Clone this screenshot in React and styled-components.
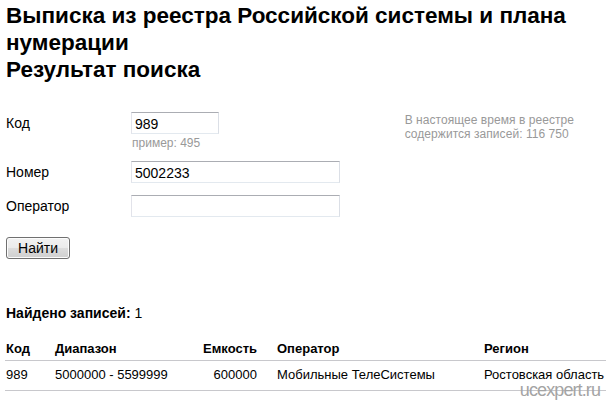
import React from "react";
import styled, { createGlobalStyle } from "styled-components";

const GlobalStyle = createGlobalStyle`
  html, body {
    margin: 0;
    padding: 0;
    background: #fff;
  }
  body {
    font-family: "Liberation Sans", Arial, sans-serif;
    color: #000;
  }
`;

const Page = styled.div`
  position: relative;
  width: 606px;
  height: 400px;
  overflow: hidden;
  padding: 2px 0 0 5px;
  box-sizing: border-box;
`;

const Title = styled.h1`
  margin: 0;
  font-size: 22.5px;
  line-height: 27px;
  font-weight: bold;
  padding-left: 1px;
`;

const Form = styled.form`
  display: grid;
  grid-template-columns: 126px 1fr;
  margin-top: 29px;
  position: relative;
`;

const Label = styled.label`
  font-size: 14px;
  line-height: 16px;
  padding: 3px 0 0 1px;
`;

const Field = styled.div`
  display: flex;
  flex-direction: column;
  margin-bottom: ${(p) => p.$gap}px;
`;

const Input = styled.input`
  box-sizing: border-box;
  width: ${(p) => p.$w}px;
  height: 22px;
  margin: 0;
  padding: 2px 3px 0;
  font-family: "Liberation Sans", Arial, sans-serif;
  font-size: 14px;
  color: #000;
  border: 1px solid;
  border-color: #abadb3 #dbdfe6 #e3e9ef #e2e3ea;
  border-radius: 0;
  background: #fff;
  outline: none;
`;

const Hint = styled.div`
  font-size: 12px;
  line-height: 14px;
  color: #999;
  margin-top: 2px;
  padding-left: 1px;
`;

const Info = styled.div`
  position: absolute;
  right: 32px;
  top: 1px;
  font-size: 12px;
  line-height: 14px;
  color: #999;
  letter-spacing: 0.05px;
`;

const Actions = styled.div`
  grid-column: 1 / span 2;
  margin-top: 20px;
`;

const Button = styled.button`
  box-sizing: border-box;
  width: 64px;
  height: 22px;
  margin-left: 1px;
  padding: 0 0 1px;
  font-family: "Liberation Sans", Arial, sans-serif;
  font-size: 14px;
  color: #000;
  border: 1px solid #707070;
  border-radius: 3px;
  background: linear-gradient(#f2f2f2 0%, #ebebeb 50%, #dddddd 51%, #cfcfcf 100%);
  box-shadow: inset 0 0 0 1px #fcfcfc;
`;

const Found = styled.p`
  margin: 46px 0 0 1px;
  font-size: 14px;
  line-height: 16px;

  b {
    font-weight: bold;
  }
`;

const Table = styled.table`
  margin-top: 14px;
  width: 601px;
  border-collapse: collapse;
  table-layout: fixed;
  font-size: 13px;
  line-height: 16px;
`;

const Th = styled.th`
  text-align: ${(p) => p.$align || "left"};
  font-weight: bold;
  padding: 6px ${(p) => (p.$align === "right" ? "19px" : "0")} 3px 1px;
  border-bottom: 1px solid #c8c8cc;
`;

const Td = styled.td`
  text-align: ${(p) => p.$align || "left"};
  padding: 6px ${(p) => (p.$align === "right" ? "19px" : "0")} 7px 1px;
  border-bottom: 1px solid #c8c8cc;
  white-space: nowrap;
`;

const Watermark = styled.div`
  position: absolute;
  right: 6px;
  bottom: 0;
  font-size: 18px;
  line-height: 20px;
  letter-spacing: -0.9px;
  color: #a4a4a4;
`;

const columns = [
  { key: "code", title: "Код", width: 49 },
  { key: "range", title: "Диапазон", width: 146 },
  { key: "size", title: "Емкость", width: 76, align: "right" },
  { key: "operator", title: "Оператор", width: 207 },
  { key: "region", title: "Регион", width: 123 },
];

const rows = [
  {
    code: "989",
    range: "5000000 - 5599999",
    size: "600000",
    operator: "Мобильные ТелеСистемы",
    region: "Ростовская область",
  },
];

export default function App() {
  return (
    <Page>
      <GlobalStyle />
      <Title>
        Выписка из реестра Российской системы и плана нумерации
        <br />
        Результат поиска
      </Title>

      <Form onSubmit={(e) => e.preventDefault()}>
        <Label>Код</Label>
        <Field $gap={11}>
          <Input $w={88} defaultValue="989" />
          <Hint>пример: 495</Hint>
        </Field>

        <Label>Номер</Label>
        <Field $gap={12}>
          <Input $w={209} defaultValue="5002233" />
        </Field>

        <Label>Оператор</Label>
        <Field $gap={0}>
          <Input $w={209} defaultValue="" />
        </Field>

        <Actions>
          <Button type="submit">Найти</Button>
        </Actions>

        <Info>
          В настоящее время в реестре
          <br />
          содержится записей: 116 750
        </Info>
      </Form>

      <Found>
        <b>Найдено записей:</b> 1
      </Found>

      <Table>
        <colgroup>
          {columns.map((c) => (
            <col key={c.key} style={{ width: c.width }} />
          ))}
        </colgroup>
        <thead>
          <tr>
            {columns.map((c) => (
              <Th key={c.key} $align={c.align}>
                {c.title}
              </Th>
            ))}
          </tr>
        </thead>
        <tbody>
          {rows.map((r, i) => (
            <tr key={i}>
              {columns.map((c) => (
                <Td key={c.key} $align={c.align}>
                  {r[c.key]}
                </Td>
              ))}
            </tr>
          ))}
        </tbody>
      </Table>

      <Watermark>ucexpert.ru</Watermark>
    </Page>
  );
}
